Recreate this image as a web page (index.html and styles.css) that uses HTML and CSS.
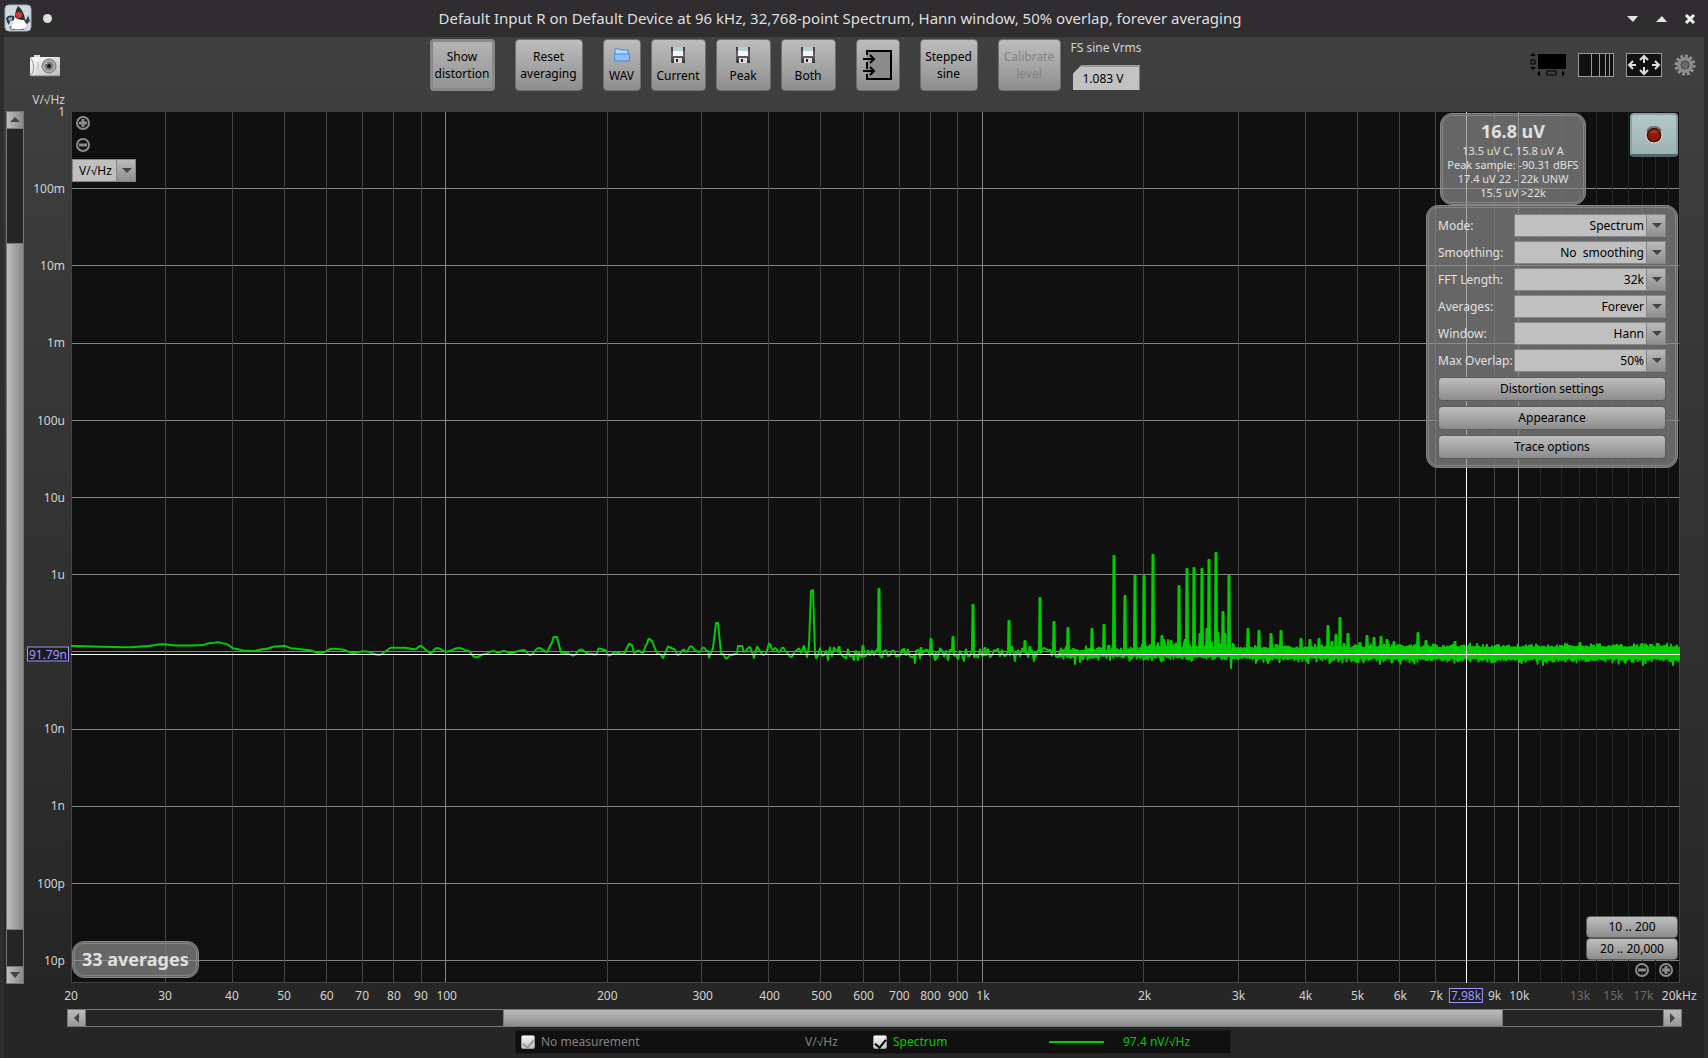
FILE: index.html
```html
<!DOCTYPE html>
<html lang="en">
<head>
<meta charset="utf-8">
<title>Default Input R on Default Device - Spectrum</title>
<link rel="stylesheet" href="styles.css">
</head>
<body>
<svg class="defs" width="0" height="0" aria-hidden="true">
  <defs>
    <linearGradient id="metal" x1="0" y1="0" x2="0" y2="1"><stop offset="0" stop-color="#3a3a3a"/><stop offset=".5" stop-color="#666"/><stop offset="1" stop-color="#333"/></linearGradient>
    <linearGradient id="silver" x1="0" y1="0" x2="1" y2="1"><stop offset="0" stop-color="#fff"/><stop offset="1" stop-color="#bdbdbd"/></linearGradient>
    <symbol id="disk" viewBox="0 0 14 16">
      <path d="M0 0h14v16H1l-1-1z" fill="url(#metal)"/>
      <path d="M2 0h10v9H2z" fill="#f4f4f4"/><path d="M2 0h10v4H2z" fill="#b9cdd6"/>
      <path d="M3 11h8v5H3z" fill="#ddd"/><path d="M5 12h2v3H5z" fill="#222"/>
    </symbol>
    <symbol id="plus" viewBox="0 0 16 16">
      <circle cx="8" cy="8" r="6" fill="none" stroke="#8c8c8c" stroke-width="2"/><path d="M8 4v8M4 8h8" stroke="#8c8c8c" stroke-width="3"/>
    </symbol>
    <symbol id="minus" viewBox="0 0 16 16">
      <circle cx="8" cy="8" r="6" fill="none" stroke="#8c8c8c" stroke-width="2"/><path d="M4 8h8" stroke="#8c8c8c" stroke-width="3"/>
    </symbol>
  </defs>
</svg>

<header class="titlebar">
  <div class="title-left">
    <svg width="28" height="28" viewBox="0 0 28 28" aria-hidden="true">
      <rect x="1" y="1" width="26" height="26" rx="4" fill="#d3d9de" stroke="#9db2c4"/>
      <path d="M5 23c4-2 13-3 17 1l-2 2H7z" fill="#777"/>
      <path d="M2 14c2-3 5-3 8-2l1 4-5 1-1 4-2-3z" fill="#2c3a44"/><path d="M4 14l4-1v3l-3 1z" fill="#7fb4dc"/>
      <path d="M20 15c2 2 3 0 4-4l2 6-3 3-3-2z" fill="#3c4246"/>
      <path d="M14 2c4 3 7 9 7 15l-10-3c0-5 1-9 3-12z" fill="#2c2f30"/>
      <path d="M11 13c4 5 8 3 9 3 2 3 2 6 1 9-3-1-5 1-7 0-3 1-4-1-7 0 1-4 2-7 4-12z" fill="#fff"/>
      <ellipse cx="15" cy="11" rx="3" ry="3" fill="#e8322c"/>
    </svg>
    <span class="dot"></span>
  </div>
  <h1 class="title">Default Input R on Default Device at 96 kHz, 32,768-point Spectrum, Hann window, 50% overlap, forever averaging</h1>
  <div class="title-right">
    <button class="wm" aria-label="Minimize"><svg width="12" height="10"><path d="M0 2h11L6 8z" fill="#e4e4e4"/></svg></button>
    <button class="wm" aria-label="Maximize"><svg width="12" height="10"><path d="M0 8h11L6 2z" fill="#e4e4e4"/></svg></button>
    <button class="wm" aria-label="Close"><svg width="12" height="10"><path d="M2 1l8 8M10 1l-8 8" stroke="#eee" stroke-width="3"/></svg></button>
  </div>
</header>

<main class="window">
  <div class="toolbar">
    <button class="bare camera" aria-label="Capture graph">
      <svg width="30" height="22" viewBox="0 0 30 22">
        <rect x="4" y="0" width="6" height="3" fill="#ddd"/><rect x="0" y="2" width="30" height="19" rx="1" fill="url(#silver)"/>
        <path d="M0 2c4 5 5 13 1 18" fill="none" stroke="#999"/><path d="M0 21h30" stroke="#777"/><path d="M8 7v8" stroke="#bbb"/>
        <circle cx="19" cy="11" r="7" fill="#a7a7a7" stroke="#777"/><circle cx="19" cy="11" r="4" fill="#777"/><circle cx="19" cy="11" r="2" fill="#15152a"/>
        <path d="M16 8l1 1" stroke="#fff"/>
      </svg>
    </button>

    <div class="actions">
      <button class="tool show pressed">Show<br>distortion</button>
      <button class="tool reset">Reset<br>averaging</button>
      <button class="tool wav">
        <svg width="16" height="16" viewBox="0 0 16 16"><path d="M1 8V2h5l1 1h7v5" fill="#bcd9fb" stroke="#3f87dd"/><path d="M0 7h16l-1 7H1z" fill="#8fc0fa" stroke="#3f87dd"/></svg>
        <span>WAV</span></button>
      <span class="trio">
        <button class="tool save"><svg width="14" height="16"><use href="#disk"/></svg><span>Current</span></button>
        <button class="tool save"><svg width="14" height="16"><use href="#disk"/></svg><span>Peak</span></button>
        <button class="tool save"><svg width="14" height="16"><use href="#disk"/></svg><span>Both</span></button>
      </span>
      <button class="tool io" aria-label="Input options">
        <svg width="30" height="32" viewBox="0 0 30 32"><path d="M4 6V2h24v28H4v-5M4 13v7" fill="#8b8b8b" stroke="#000" stroke-width="2"/><path d="M0 10h10M7 6l4 4-4 4M0 22h10M7 18l4 4-4 4" fill="none" stroke="#000" stroke-width="2"/></svg>
      </button>
      <button class="tool stepped">Stepped<br>sine</button>
      <button class="tool calibrate" disabled>Calibrate<br>level</button>
      <div class="fs">
        <label for="fs">FS sine Vrms</label>
        <input id="fs" type="text" value="1.083 V">
      </div>
    </div>

    <div class="view-tools">
      <button class="bare" aria-label="Scrollbars">
        <svg width="36" height="24" viewBox="0 0 36 24"><path d="M8 1h28v15H8zM3 0l3 3H0zM3 17l3-3H0zM7 20.500l3-3v6zM35 20.500l-3-3v6z" fill="#000"/><rect x="1" y="7" width="4" height="4" fill="none" stroke="#000"/><rect x="17" y="18" width="9" height="4" fill="none" stroke="#000"/></svg>
      </button>
      <button class="bare" aria-label="Frequency axis">
        <svg width="36" height="24" viewBox="0 0 36 24"><rect x=".5" y=".5" width="35" height="23" fill="#111" stroke="#999"/><path d="M13.500 0v24M21.500 0v24M27.500 0v24M31.500 0v24" stroke="#999"/></svg>
      </button>
      <button class="bare" aria-label="Graph limits">
        <svg width="36" height="24" viewBox="0 0 36 24"><rect x=".5" y=".5" width="35" height="23" fill="#111" stroke="#999"/><path d="M18 10V4M14 7l4-4 4 4M18 14v6M14 17l4 4 4-4M10 12H4M7 8l-4 4 4 4M26 12h6M29 8l4 4-4 4" fill="none" stroke="#ddd" stroke-width="2"/></svg>
      </button>
      <button class="bare gear" aria-label="Graph controls">
        <svg width="22" height="22" viewBox="0 0 22 22"><circle cx="11" cy="11" r="9" fill="none" stroke="#969696" stroke-width="3" stroke-dasharray="2.700 2"/><circle cx="11" cy="11" r="6" fill="#555" stroke="#8b8b8b" stroke-width="4"/><circle cx="11" cy="11" r="4" fill="#6b6b6b" stroke="#444"/></svg>
      </button>
    </div>
  </div>

  <div class="chart">
    <div class="scroll vscroll">
      <button class="arrow" aria-label="Scroll up"><svg width="10" height="6"><path d="M0 5h10L5 0z" fill="#444"/></svg></button>
      <div class="gap-before"></div><div class="thumb"></div><div class="gap-after"></div>
      <button class="arrow" aria-label="Scroll down"><svg width="10" height="6"><path d="M0 0h10L5 6z" fill="#444"/></svg></button>
    </div>

    <div class="yaxis">
      <span class="unit">V/√Hz</span>
      <span style="top:0%">1</span>
      <span style="top:8.800%">100m</span>
      <span style="top:17.660%">10m</span>
      <span style="top:26.530%">1m</span>
      <span style="top:35.450%">100u</span>
      <span style="top:44.310%">10u</span>
      <span style="top:53.120%">1u</span>
      <span style="top:70.840%">10n</span>
      <span style="top:79.710%">1n</span>
      <span style="top:88.630%">100p</span>
      <span style="top:97.430%">10p</span>
      <span class="reading" style="top:62.260%">91.79n</span>
    </div>

    <div class="plot">
      <svg id="graph" viewBox="71 112 1609 871" preserveAspectRatio="none" role="img" aria-label="Spectrum of input R">
        <g id="grid" shape-rendering="crispEdges"></g>
        <path id="trace" fill="none" stroke="#00cc00" stroke-width="2" stroke-linejoin="round"/>
        <path d="M71 654.500H1680M1466.500 111V983" stroke="#fff" shape-rendering="crispEdges"/>
      </svg>

      <div class="corner">
        <button class="bare" aria-label="Expand vertical axis"><svg width="16" height="16"><use href="#plus"/></svg></button>
        <button class="bare" aria-label="Contract vertical axis"><svg width="16" height="16"><use href="#minus"/></svg></button>
        <span class="combo unit-combo"><select aria-label="Y axis unit"><option>V/√Hz</option></select></span>
      </div>

      <div class="panel averages">33 averages</div>

      <div class="panel stats">
        <strong>16.8 uV</strong>
        <span>13.5 uV C, 15.8 uV A</span>
        <span>Peak sample: -90.31 dBFS</span>
        <span>17.4 uV 22 - 22k UNW</span>
        <span>15.5 uV &gt;22k</span>
      </div>

      <button class="record" aria-label="Record">
        <svg width="18" height="18"><circle cx="9" cy="9" r="8" fill="#44140c" stroke="#f3dedb"/><path d="M2 5a8 8 0 0 1 14 0" fill="none" stroke="#68777a" stroke-width="2"/><circle cx="9" cy="9" r="6" fill="#8c1a05"/><path d="M6 7c2-2 4-2 6 0" stroke="#a8402c" stroke-width="2" fill="none"/></svg>
      </button>

      <form class="panel settings">
        <label for="mode">Mode:</label><span class="combo"><select id="mode"><option>Spectrum</option></select></span>
        <label for="smooth">Smoothing:</label><span class="combo"><select id="smooth"><option>No&nbsp; smoothing</option></select></span>
        <label for="fft">FFT Length:</label><span class="combo"><select id="fft"><option>32k</option></select></span>
        <label for="avg">Averages:</label><span class="combo"><select id="avg"><option>Forever</option></select></span>
        <label for="win">Window:</label><span class="combo"><select id="win"><option>Hann</option></select></span>
        <label for="overlap">Max Overlap:</label><span class="combo"><select id="overlap"><option>50%</option></select></span>
        <div class="setting-buttons">
          <button type="button" class="flat">Distortion settings</button>
          <button type="button" class="flat">Appearance</button>
          <button type="button" class="flat">Trace options</button>
        </div>
      </form>

      <div class="ranges">
        <button class="flat">10 .. 200</button>
        <button class="flat">20 .. 20,000</button>
        <div class="zooms">
          <button class="bare" aria-label="Zoom out"><svg width="16" height="16"><use href="#minus"/></svg></button>
          <button class="bare" aria-label="Zoom in"><svg width="16" height="16"><use href="#plus"/></svg></button>
        </div>
      </div>
    </div>

    <div class="xaxis">
      <span style="left:0%">20</span><span style="left:5.850%">30</span><span style="left:10.000%">40</span><span style="left:13.240%">50</span>
      <span style="left:15.900%">60</span><span style="left:18.100%">70</span><span style="left:20.070%">80</span><span style="left:21.750%">90</span>
      <span style="left:23.350%">100</span><span style="left:33.330%">200</span><span style="left:39.260%">300</span><span style="left:43.420%">400</span>
      <span style="left:46.650%">500</span><span style="left:49.260%">600</span><span style="left:51.480%">700</span><span style="left:53.420%">800</span>
      <span style="left:55.140%">900</span><span style="left:56.680%">1k</span><span style="left:66.720%">2k</span><span style="left:72.570%">3k</span>
      <span style="left:76.730%">4k</span><span style="left:79.960%">5k</span><span style="left:82.620%">6k</span><span style="left:84.850%">7k</span>
      <span style="left:88.480%">9k</span><span style="left:90.010%">10k</span>
      <span class="dim" style="left:93.790%">13k</span><span class="dim" style="left:95.860%">15k</span><span class="dim" style="left:97.720%">17k</span>
      <span style="left:99.950%">20kHz</span>
      <span class="reading" style="left:86.700%">7.98k</span>
    </div>

    <div class="scroll hscroll">
      <button class="arrow" aria-label="Scroll left"><svg width="6" height="10"><path d="M5 0v10L0 5z" fill="#444"/></svg></button>
      <div class="gap-before"></div><div class="thumb"></div><div class="gap-after"></div>
      <button class="arrow" aria-label="Scroll right"><svg width="6" height="10"><path d="M0 0v10l5-5z" fill="#444"/></svg></button>
    </div>
  </div>

  <footer class="legend">
    <label class="off"><input type="checkbox" checked disabled>No measurement</label>
    <span class="off legend-unit">V/√Hz</span>
    <label class="on"><input type="checkbox" checked>Spectrum</label>
    <span class="swatch"></span>
    <span class="on">97.4 nV/√Hz</span>
  </footer>
</main>
<script src="graph.js"></script>
</body>
</html>
```
FILE: styles.css
```css
* { box-sizing: border-box; }

body {
  margin: 0;
  min-height: 100vh;
  display: flex;
  flex-direction: column;
  background: #2f2d30;
  color: #d2d2d2;
  font: 12px/16px "Noto Sans", sans-serif;
}

button, input, select { font: inherit; color: #000; margin: 0; }
button { padding: 0; }
svg { display: block; }
.defs { position: absolute; }

.bare { background: none; border: 0; line-height: 0; }

/* title bar */
.titlebar { display: flex; align-items: center; height: 37px; padding-bottom: 1px; }
.title-left { display: flex; align-items: center; gap: 11px; width: 56px; padding-left: 4px; }
.dot { width: 9px; height: 9px; border-radius: 50%; background: #dedede; }
.title { flex: 1; margin: 0; text-align: center; font-size: 15px; line-height: 20px; font-weight: 400; color: #dfdfdf; white-space: nowrap; }
.title-right { display: flex; justify-content: space-between; width: 84px; padding: 1px 12px 0 3px; }
.wm { background: none; border: 0; }

.window {
  flex: 1;
  display: flex;
  flex-direction: column;
  margin: 0 4px;
  padding-bottom: 4px;
  background: linear-gradient(#404040, #262626 92%);
}

/* toolbar */
.toolbar { display: flex; justify-content: space-between; height: 75px; padding: 2px 8px 0 26px; }
.camera { align-self: flex-start; margin-top: 16px; }
.actions { display: flex; gap: 20px; align-items: flex-start; margin-right: 20px; }
.trio { display: flex; gap: 10px; margin-left: -10px; }
.tool {
  height: 52px;
  border: 1px solid #6f6f6f;
  border-radius: 4px;
  background: linear-gradient(#bdbdbd, #8e8e8e);
  line-height: 17px;
  text-align: center;
}
.tool svg { margin: 0 auto; }
.tool span { display: block; margin-top: 4px; }
.show { width: 65px; }
.pressed { border: 3px solid #888; border-radius: 4px; background: linear-gradient(#b4b4b4, #949494); }
.reset { width: 68px; }
.wav { width: 38px; }
.save { width: 55px; }
.io { width: 44px; }
.stepped { width: 58px; }
.calibrate { width: 63px; color: #848484; }
.fs { margin-left: -10px; padding-top: 1px; width: 70px; white-space: nowrap; }
.fs label { display: block; margin-bottom: 9px; }
.fs input {
  width: 67px;
  height: 25px;
  margin-left: 2px;
  padding: 0 6px 0 0;
  border: 0;
  border-top: 2px solid #999;
  background: #c2c2c2;
  text-align: center;
  clip-path: polygon(9px 0, 100% 0, 100% 100%, 0 100%, 0 9px);
}
.view-tools { display: flex; gap: 12px; height: 24px; margin-top: 14px; align-items: center; }

/* chart */
.chart {
  flex: 1;
  display: grid;
  grid-template-columns: 18px 47px 1fr;
  grid-template-rows: 1fr 26px 18px;
  padding: 0 24px 0 2px;
}
.scroll { display: flex; border: 1px solid #777; background: #252525; }
.arrow { display: flex; align-items: center; justify-content: center; border: 0; background: linear-gradient(#bcbcbc, #989898); }
.vscroll { flex-direction: column; grid-area: 1 / 1; margin: -1px 0; }
.vscroll .arrow { height: 16px; }
.vscroll .arrow, .vscroll .thumb { background: linear-gradient(90deg, #bebebe, #888); }
.vscroll .gap-before { flex: 114; border-top: 1px solid #777; }
.vscroll .thumb { flex: 687; border: 1px solid #777; border-width: 1px 0; }
.vscroll .gap-after { flex: 36; border-bottom: 1px solid #777; }
.hscroll { grid-area: 3 / 2 / 4 / 4; margin: 0 -2px 0 43px; }
.hscroll .arrow { width: 17px; }
.hscroll .gap-before { flex: 418; border-left: 1px solid #777; }
.hscroll .thumb { flex: 1000; background: linear-gradient(#bebebe, #8b8b8b); border: 1px solid #777; border-width: 0 1px; }
.hscroll .gap-after { flex: 160; border-right: 1px solid #777; }

.yaxis { grid-area: 1 / 2; position: relative; line-height: 12px; }
.yaxis span { position: absolute; right: 6px; transform: translateY(-50%); }
.yaxis .unit { top: -12px; }
.xaxis { grid-area: 2 / 3; position: relative; }
.xaxis span { position: absolute; top: 5px; transform: translateX(-50%); }
.xaxis .dim { color: #6c6c6c; }
.yaxis .reading, .xaxis .reading {
  padding: 0 1px;
  border: 1px solid #9c98ff;
  background: #1c1c1f;
  color: #9c98ff;
  line-height: 13px;
}
.yaxis .reading { right: 2px; }

.plot { grid-area: 1 / 3; position: relative; min-height: 640px; background: #101010; }
#graph { position: absolute; width: 100%; height: 100%; }

.corner { position: absolute; top: 3px; left: 1px; display: flex; flex-direction: column; align-items: flex-start; gap: 6px; }
.corner .bare { margin-left: 3px; }

.combo { position: relative; display: block; height: 23px; }
.combo select {
  width: 100%;
  height: 100%;
  padding: 0 21px 0 6px;
  border: 1px solid #858585;
  border-radius: 0;
  background: #c0c0c0;
  text-align-last: right;
  appearance: none;
}
.combo::before {
  content: "";
  position: absolute;
  inset: 1px 1px 1px auto;
  width: 18px;
  border-left: 1px solid #858585;
  background: linear-gradient(#bababa, #8f8f8f);
  pointer-events: none;
}
.combo::after {
  content: "";
  position: absolute;
  top: 9px;
  right: 4px;
  border: 5px solid transparent;
  border-top-color: #444;
  border-bottom: 0;
  pointer-events: none;
}
.unit-combo { width: 64px; }
.unit-combo select { text-align-last: left; }

.flat {
  height: 23px;
  border: 1px solid #5c5c5c;
  border-radius: 4px;
  background: linear-gradient(#bebebe, #8c8c8c);
}

.panel {
  position: absolute;
  border: 3px double #868686;
  border-radius: 12px;
  background: rgba(140, 140, 140, 0.7);
  color: #e0e0e0;
}
.averages { left: 1px; bottom: 5px; height: 37px; padding: 0 7px; font-size: 18px; line-height: 31px; font-weight: 700; }
.stats { top: 1px; right: 94px; width: 146px; height: 92px; padding-top: 2px; text-align: center; font-size: 11px; line-height: 14px; white-space: nowrap; }
.stats strong { display: block; font-size: 18px; line-height: 26px; }
.stats span { display: block; }
.settings {
  top: 93px;
  right: 2px;
  width: 252px;
  display: grid;
  grid-template-columns: 75px 1fr;
  gap: 4px 1px;
  align-items: center;
  padding: 6px 9px 6px;
  white-space: nowrap;
}
.setting-buttons { grid-column: 1 / 3; display: grid; gap: 5px; padding-top: 1px; }
.setting-buttons .flat { height: 24px; }

.record {
  position: absolute;
  top: 1px;
  right: 2px;
  width: 48px;
  height: 44px;
  display: flex;
  align-items: center;
  justify-content: center;
  border: 2px solid #8aa0a2;
  border-bottom: 3px solid #536769;
  border-radius: 4px;
  background: linear-gradient(#b3c6c8, #9fb2b4);
}

.ranges { position: absolute; right: 2px; bottom: 5px; width: 92px; display: grid; }
.ranges .flat { height: 22px; }
.zooms { display: flex; justify-content: flex-end; gap: 8px; padding: 2px 4px 0 0; }

/* legend */
.legend {
  display: flex;
  align-items: center;
  align-self: center;
  width: 716px;
  height: 24px;
  margin: 3px 0 0 38px;
  padding-left: 5px;
  background: #101010;
  border: 1px solid #1b1b1b;
}
.legend label { display: flex; align-items: center; gap: 6px; }
.legend input {
  appearance: none;
  width: 14px;
  height: 14px;
  margin: 0;
  border: 1px solid #999;
  border-radius: 2px;
  background: linear-gradient(#f4f4f4, #c4c4c4);
  display: grid;
  place-items: center;
}
.legend input::after { content: ""; width: 5px; height: 9px; border: solid #000; border-width: 0 2px 2px 0; rotate: 40deg; }
.legend input:disabled::after { border-color: #999; }
.off { color: #828282; }
.on { color: #00cc00; }
.legend label.off { width: 284px; }
.legend-unit { width: 68px; }
.legend label.on { width: 176px; }
.swatch { width: 55px; height: 2px; margin-right: 19px; background: #00cc00; }
```
FILE: graph.js
```js
// Graph space: x 71..1680 is 20 Hz..20 kHz, y 111 is 1 V/rtHz with 77.2 units per decade.
const LEFT = 71, WIDTH = 1609;
const freqX = f => Math.floor(LEFT + WIDTH * Math.log10(f / 20) / 3) + 0.5;

function line(x1, y1, x2, y2, color) {
  const el = document.createElementNS("http://www.w3.org/2000/svg", "line");
  Object.entries({ x1, y1, x2, y2, stroke: color }).forEach(([k, v]) => el.setAttribute(k, v));
  document.getElementById("grid").appendChild(el);
}

for (let k = 1; k <= 11; k++) {
  const y = Math.round(111 + 77.2 * k) + 0.5;
  line(71, y, 1680, y, "#858585");
}
for (let f = 11000; f < 20000; f += 1000) line(freqX(f), 112, freqX(f), 983, "#242424");
for (const decade of [10, 100, 1000]) {
  for (let n = 2; n <= 9; n++) {
    const x = freqX(n * decade);
    line(x, 112, x, 983, "#444");
  }
}
for (const f of [100, 1000, 10000]) line(freqX(f), 112, freqX(f), 983, "#858585");
line(1679.5, 112, 1679.5, 983, "#444");
line(71, 982.5, 1680, 982.5, "#444");

// Low frequency bins
const low = [
  [71,646],[100,646.700],[130,647.300],[145,646.300],[162,644.300],[180,645.500],[200,645.300],[212,643],[218,642.300],[224,643.500],
  [236,649],[245,650.700],[253,651],[265,649],[276,646.500],[284,646],[293,648.500],[308,650],[320,653.300],[333,648.700],[342,649.500],
  [353,653],[364,651.300],[380,655],[391,647.700],[404,647.700],[415,649.300],[421,645.700],[430,653.300],[437,648],[446,651.700],
  [459,648],[467,650.500],[476,657.300],[485,654],[493,651],[498,652.500],[504,651],[510,653],[524,650],[530,655],[539,648],[547,652],
  [551,644],[554,637],[557,637],[561,652.700],[567,653],[573,655.500],[581,649.500],[588,653.500],[596,654.500],[599,648.500],[605,650],
  [609,655.500],[615,652.500],[624,654],[629,643.700],[632,645],[634,653],[638,650.500],[643,653],[646,645],[649,638.700],[652,641],[657,653.500],
  [660,654],[663,658],[668,646.700],[674,649],[678,655],[684,649.500],[686,652],[691,646.300],[696,651],[700,652],[703,647.500],
  [708,651],[709,657.500],[713,648],[716,623],[718,623],[721,653],[723,654],[726,658.500],[731,655],[737,653.500],[738,646],[742,646],
  [744,652],[750,647],[754,658],[757,646.700],[763,655],[766,654],[769,643.500],[773,650],[775,648],[779,652],[783,647.500],[786,652],
  [791,657],[796,651],[799,648.500],[801,653],[804,646],[807,657],[809,645],[811,591],[813,590],[815,653],[816,658]
];

// Tones and spurs: position and peak height
const peaks = new Map([
  [839,646],[863,645],[879,588],[904,648],[921,647],[931,638],[953,636],[973,604],[985,647],[1009,620],[1025,640],[1030,646],
  [1040,597],[1054,621],[1068,627],[1092,628],[1104,624],[1109,645],[1114,555],[1125,595],[1135,575],[1144,575],
  [1153,554],[1157,645],[1162,635],[1164,639],[1171,640],[1179,585],[1185,639],[1187,568],[1194,567],[1202,568],[1200,633],[1207,628],
  [1209,559],[1216,552],[1218,632],[1223,611],[1225,633],[1229,575],[1248,628],[1259,630],[1271,633],[1276,644],
  [1281,630],[1301,638],[1310,639],[1319,638],[1328,625],[1332,641],[1336,634],[1340,617],[1344,643],[1348,633],
  [1360,642],[1367,635],[1374,637],[1381,636],[1387,639],[1394,641],[1418,632],[1426,640],[1455,641],[1580,642],[1642,643],[1658,643]
]);
const dips = new Map([[828,660],[854,660],[858,660],[915,663],[935,660],[964,661],[1015,661],[1034,661],[1075,664],[1080,662],
  [1110,660],[1152,660],[1231,668],[1256,663],[1268,663],[1380,664],[1543,665],[1643,665],[1673,665]]);

let seed = 33;
const rnd = () => (seed = (seed * 16807) % 2147483647) / 2147483647;

let d = "M" + low[0].join(" ");
for (let i = 1; i < low.length; i++) {
  const [x0, y0] = low[i - 1], [x1, y1] = low[i], m = (x0 + x1) / 2;
  d += Math.abs(y1 - y0) > 7 ? `L${x1} ${y1}` : `C${m} ${y0} ${m} ${y1} ${x1} ${y1}`;
}
for (let x = 817; x < 1680; x++) {
  const dense = Math.min(1, Math.max(0, (x - 980) / 420));
  const comb = x > 1140 && x < 1235 ? 9 : 0;
  if (peaks.has(x)) {
    const y = peaks.get(x) + 1;
    d += `L${x - 1} 652L${x - 0.500} ${y}L${x + 0.500} ${y}L${x + 1} 653`;
    continue;
  }
  if (dips.has(x)) { d += `L${x} ${dips.get(x)}L${x + 1} 652`; continue; }
  if (x < 1060 && x % 2) continue;
  const top = 652 - 4 * dense - comb * rnd() * rnd() - 5 * rnd() * rnd();
  const bottom = 654 + 4 * dense + 6 * rnd() * rnd();
  d += x < 1060 ? `L${x} ${rnd() < 0.500 ? top - 1 : bottom + 1}` : `L${x} ${top}L${x + 0.500} ${bottom}`;
}
document.getElementById("trace").setAttribute("d", d);
```
